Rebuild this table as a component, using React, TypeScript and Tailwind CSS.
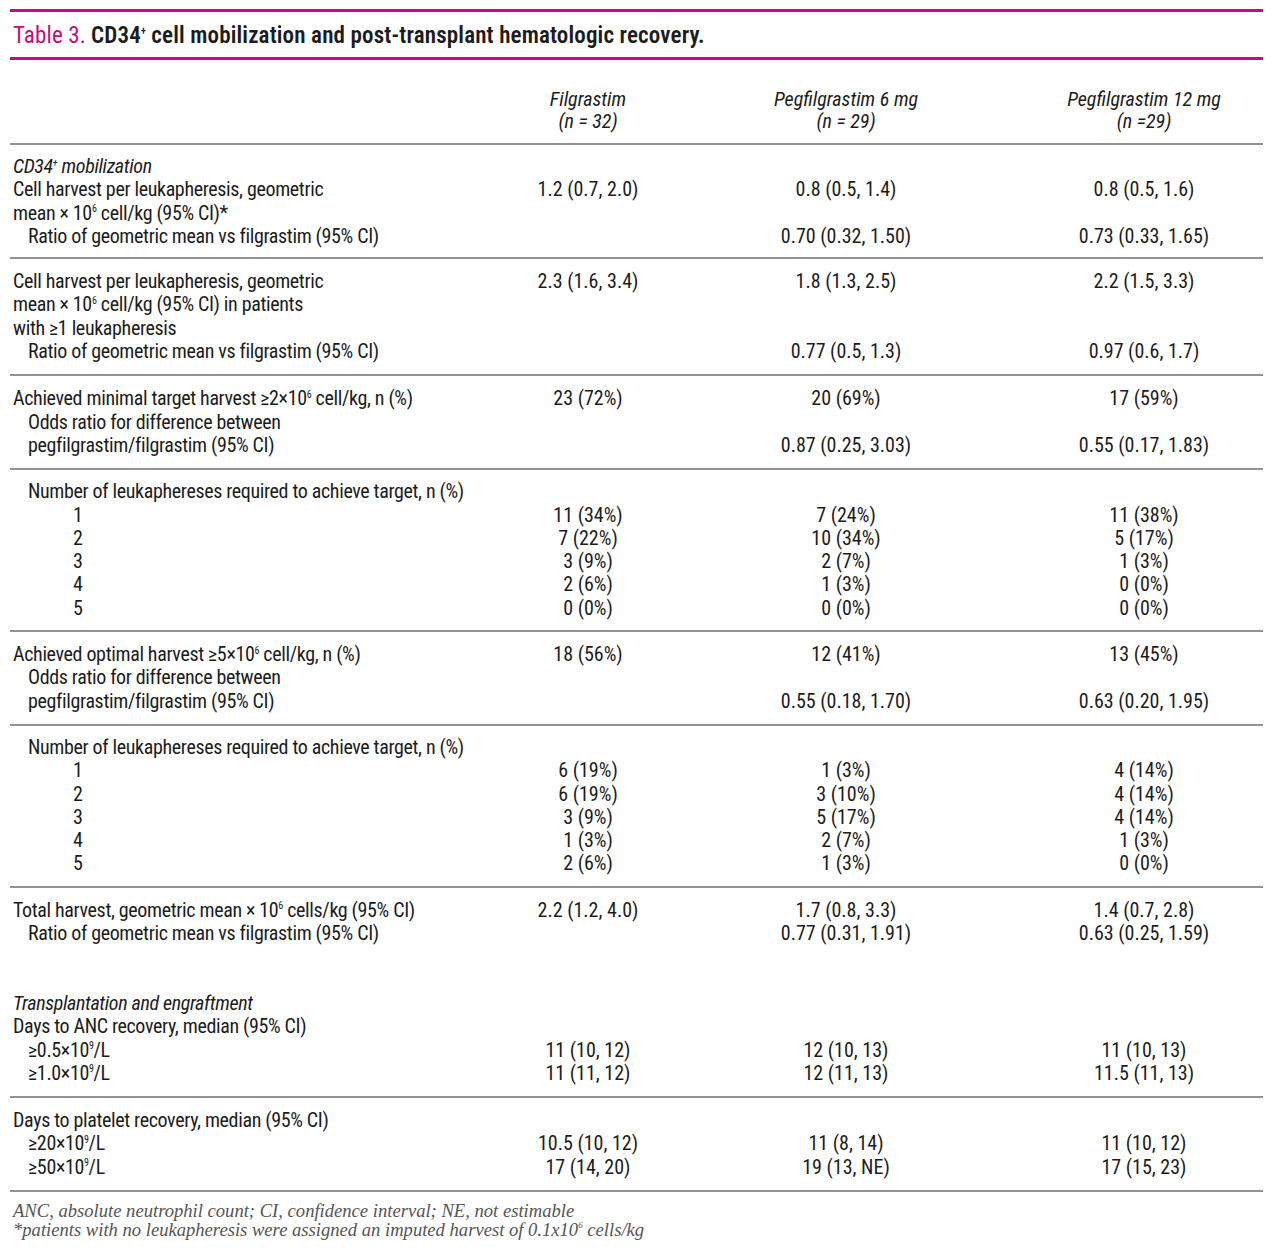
import React from "react";

type Row = {
  label?: React.ReactNode;
  indent?: 0 | 1 | 2;
  italic?: boolean;
  vals?: [string, string, string];
};

const sup = (s: string) => <sup className="text-[10px] top-[-0.75em]">{s}</sup>;

const indentClass = ["pl-[3px]", "pl-[18px]", "pl-[63px]"];

const leuka = (data: [string, string, string][]): Row[] => [
  { label: "Number of leukaphereses required to achieve target, n (%)", indent: 1 },
  ...data.map((vals, i) => ({ label: String(i + 1), indent: 2 as const, vals })),
];

const sections: { rows: Row[]; pad?: string }[] = [
  {
    pad: "pt-[10px] pb-[9px]",
    rows: [
      { label: <>CD34{sup("+")} mobilization</>, italic: true },
      {
        label: "Cell harvest per leukapheresis, geometric",
        vals: ["1.2 (0.7, 2.0)", "0.8 (0.5, 1.4)", "0.8 (0.5, 1.6)"],
      },
      { label: <>mean × 10{sup("6")} cell/kg (95% CI)*</> },
      {
        label: "Ratio of geometric mean vs filgrastim (95% CI)",
        indent: 1,
        vals: ["", "0.70 (0.32, 1.50)", "0.73 (0.33, 1.65)"],
      },
    ],
  },
  {
    rows: [
      {
        label: "Cell harvest per leukapheresis, geometric",
        vals: ["2.3 (1.6, 3.4)", "1.8 (1.3, 2.5)", "2.2 (1.5, 3.3)"],
      },
      { label: <>mean × 10{sup("6")} cell/kg (95% CI) in patients</> },
      { label: "with ≥1 leukapheresis" },
      {
        label: "Ratio of geometric mean vs filgrastim (95% CI)",
        indent: 1,
        vals: ["", "0.77 (0.5, 1.3)", "0.97 (0.6, 1.7)"],
      },
    ],
  },
  {
    rows: [
      {
        label: <>Achieved minimal target harvest ≥2×10{sup("6")} cell/kg, n (%)</>,
        vals: ["23 (72%)", "20 (69%)", "17 (59%)"],
      },
      { label: "Odds ratio for difference between", indent: 1 },
      {
        label: "pegfilgrastim/filgrastim (95% CI)",
        indent: 1,
        vals: ["", "0.87 (0.25, 3.03)", "0.55 (0.17, 1.83)"],
      },
    ],
  },
  {
    pad: "py-[10px]",
    rows: leuka([
      ["11 (34%)", "7 (24%)", "11 (38%)"],
      ["7 (22%)", "10 (34%)", "5 (17%)"],
      ["3 (9%)", "2 (7%)", "1 (3%)"],
      ["2 (6%)", "1 (3%)", "0 (0%)"],
      ["0 (0%)", "0 (0%)", "0 (0%)"],
    ]),
  },
  {
    rows: [
      {
        label: <>Achieved optimal harvest ≥5×10{sup("6")} cell/kg, n (%)</>,
        vals: ["18 (56%)", "12 (41%)", "13 (45%)"],
      },
      { label: "Odds ratio for difference between", indent: 1 },
      {
        label: "pegfilgrastim/filgrastim (95% CI)",
        indent: 1,
        vals: ["", "0.55 (0.18, 1.70)", "0.63 (0.20, 1.95)"],
      },
    ],
  },
  {
    pad: "py-[10px]",
    rows: leuka([
      ["6 (19%)", "1 (3%)", "4 (14%)"],
      ["6 (19%)", "3 (10%)", "4 (14%)"],
      ["3 (9%)", "5 (17%)", "4 (14%)"],
      ["1 (3%)", "2 (7%)", "1 (3%)"],
      ["2 (6%)", "1 (3%)", "0 (0%)"],
    ]),
  },
  {
    rows: [
      {
        label: <>Total harvest, geometric mean × 10{sup("6")} cells/kg (95% CI)</>,
        vals: ["2.2 (1.2, 4.0)", "1.7 (0.8, 3.3)", "1.4 (0.7, 2.8)"],
      },
      {
        label: "Ratio of geometric mean vs filgrastim (95% CI)",
        indent: 1,
        vals: ["", "0.77 (0.31, 1.91)", "0.63 (0.25, 1.59)"],
      },
      {},
      {},
      { label: "Transplantation and engraftment", italic: true },
      { label: "Days to ANC recovery, median (95% CI)" },
      {
        label: <>≥0.5×10{sup("9")}/L</>,
        indent: 1,
        vals: ["11 (10, 12)", "12 (10, 13)", "11 (10, 13)"],
      },
      {
        label: <>≥1.0×10{sup("9")}/L</>,
        indent: 1,
        vals: ["11 (11, 12)", "12 (11, 13)", "11.5 (11, 13)"],
      },
    ],
  },
  {
    rows: [
      { label: "Days to platelet recovery, median (95% CI)" },
      {
        label: <>≥20×10{sup("9")}/L</>,
        indent: 1,
        vals: ["10.5 (10, 12)", "11 (8, 14)", "11 (10, 12)"],
      },
      {
        label: <>≥50×10{sup("9")}/L</>,
        indent: 1,
        vals: ["17 (14, 20)", "19 (13, NE)", "17 (15, 23)"],
      },
    ],
  },
];

const cols = "grid grid-cols-[499px_158px_358px_238px]";

const TableRow = ({ row }: { row: Row }) => (
  <>
    <div
      className={`${indentClass[row.indent ?? 0]} whitespace-nowrap tracking-[-0.35px] ${row.italic ? "italic" : ""}`}
    >
      {row.label ?? "\u00a0"}
    </div>
    {[0, 1, 2].map((i) => (
      <div key={i} className="text-center whitespace-nowrap">
        {row.vals?.[i] || "\u00a0"}
      </div>
    ))}
  </>
);

export default function App() {
  return (
    <div className="bg-white min-h-[1257px] pt-[9px] text-[#1c1c1c] font-['Roboto_Condensed',Roboto,sans-serif] font-stretch-condensed">
      <div className="w-[1253px] ml-[10px]">
        <div className="h-[3px] bg-[#c90a78]" />
        <div className="h-[45px] flex items-center pt-[4px] pl-[3px] text-[23px] tracking-[0.15px] whitespace-nowrap">
          <span className="text-[#c90a78]">Table 3.</span>
          <span className="font-semibold ml-[5px]">
            CD34<sup className="text-[10px] top-[-0.9em]">+</sup> cell mobilization and post-transplant
            hematologic recovery.
          </span>
        </div>
        <div className="h-[3px] bg-[#c90a78]" />

        <div className={`${cols} pt-[28px] pb-[11px] text-[20px] leading-[22px] italic`}>
          <div />
          <div className="text-center">
            Filgrastim
            <br />
            (n = 32)
          </div>
          <div className="text-center">
            Pegfilgrastim 6 mg
            <br />
            (n = 29)
          </div>
          <div className="text-center">
            Pegfilgrastim 12 mg
            <br />
            (n =29)
          </div>
        </div>

        {sections.map((section, si) => (
          <div
            key={si}
            className={`${cols} border-t-2 border-[#939393] ${section.pad ?? "py-[11px]"} text-[20px] leading-[23.3px]`}
          >
            {section.rows.map((row, ri) => (
              <TableRow key={ri} row={row} />
            ))}
          </div>
        ))}

        <div className="border-t-2 border-[#939393] pt-[9px] pl-[3px] text-[18.6px] leading-[19px] italic text-[#555] font-['Liberation_Serif',serif] font-stretch-normal">
          <p>ANC, absolute neutrophil count; CI, confidence interval; NE, not estimable</p>
          <p>
            *patients with no leukapheresis were assigned an imputed harvest of 0.1x10
            <sup className="text-[9px] top-[-0.9em]">6</sup> cells/kg
          </p>
        </div>
      </div>
    </div>
  );
}
